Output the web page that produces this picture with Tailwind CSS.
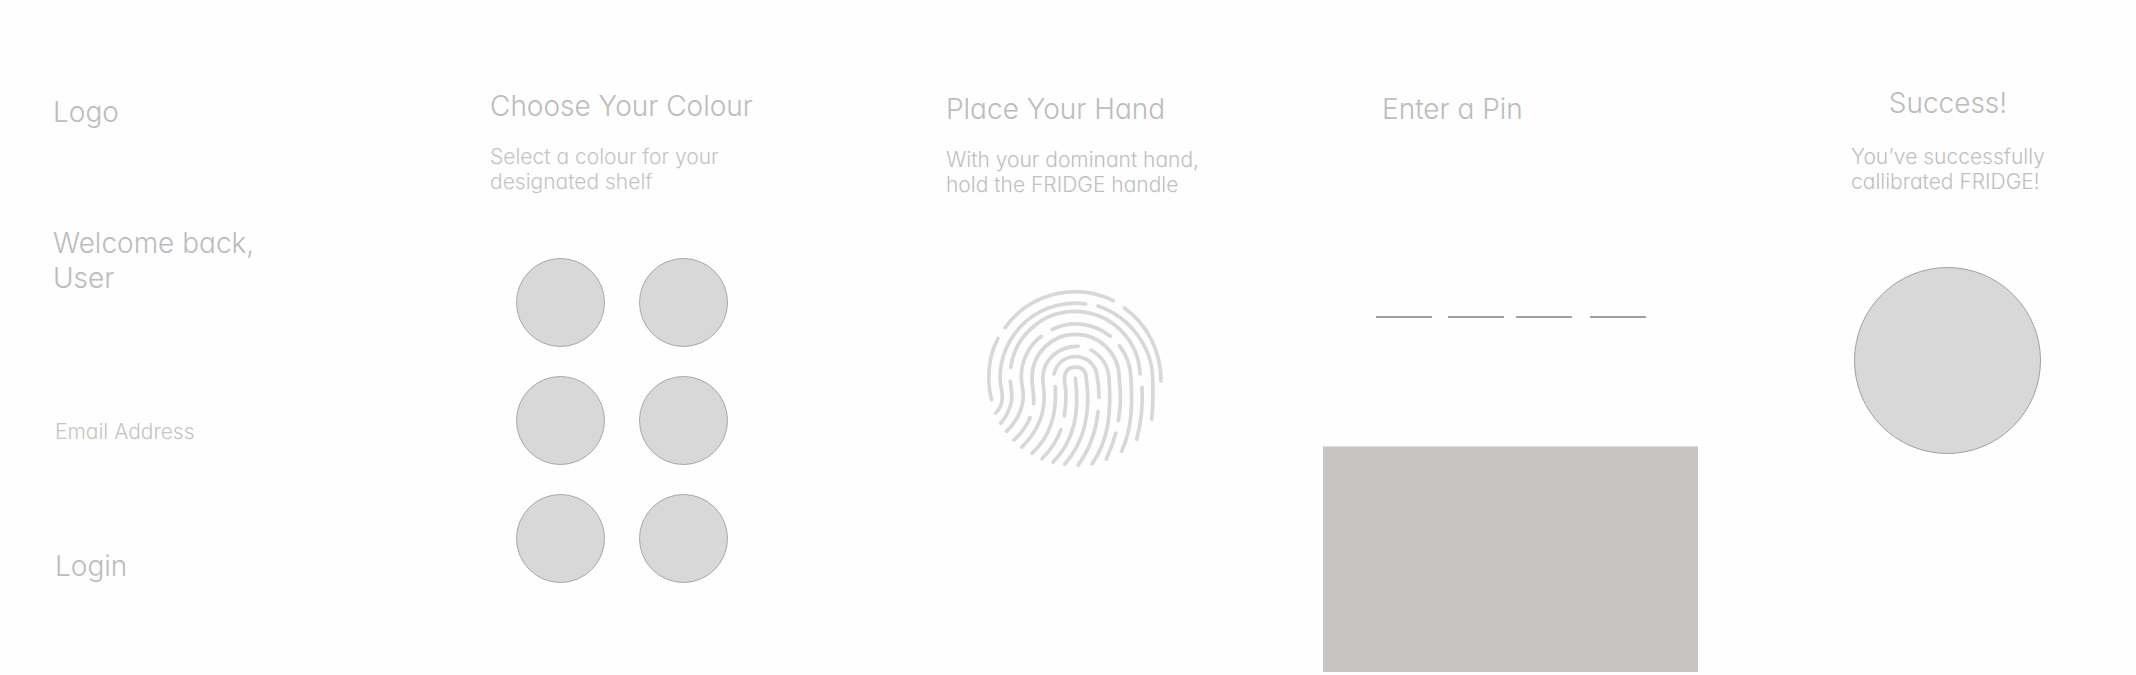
<!DOCTYPE html>
<html lang="en">
<head>
<meta charset="utf-8">
<meta name="viewport" content="width=device-width, initial-scale=1">
<title>FRIDGE setup flow</title>
<script src="https://cdn.jsdelivr.net/npm/@tailwindcss/browser@4"></script>
</head>
<body class="bg-[#fefefe] font-['Inter',sans-serif] font-light text-[#bcbcbc] [font-feature-settings:'cv11']">
<main class="grid min-h-screen grid-cols-[490fr_456fr_377fr_528fr_285fr] items-start">

  <!-- Sign in -->
  <form class="flex flex-col items-start pt-[95px] pl-[53px]">
    <p class="text-[28px] leading-[35px]">Logo</p>
    <h1 class="mt-24 text-[28px] leading-[35px]">Welcome back,<br>User</h1>
    <input type="email" aria-label="Email Address" placeholder="Email Address" class="mt-[123px] ml-0.5 h-[25px] w-60 bg-transparent text-[21px] leading-[25px] outline-none placeholder:text-[#c4c4c4]">
    <button type="button" class="mt-[105px] ml-0.5 text-[28px] leading-[35px]">Login</button>
  </form>

  <!-- Colour choice -->
  <section class="pt-[89px]">
    <h2 class="text-[28px] leading-[35px]">Choose Your Colour</h2>
    <p class="mt-5 text-[21px] leading-[25px] text-[#c4c4c4]">Select a colour for your<br>designated shelf</p>
    <div class="mt-16 ml-[26px] grid w-fit grid-cols-2 gap-x-[34px] gap-y-[29px]">
      <button type="button" aria-label="Colour 1" class="size-[89px] rounded-full border border-[#a8a8a8] bg-[#d8d8d8]"></button>
      <button type="button" aria-label="Colour 2" class="size-[89px] rounded-full border border-[#a8a8a8] bg-[#d8d8d8]"></button>
      <button type="button" aria-label="Colour 3" class="size-[89px] rounded-full border border-[#a8a8a8] bg-[#d8d8d8]"></button>
      <button type="button" aria-label="Colour 4" class="size-[89px] rounded-full border border-[#a8a8a8] bg-[#d8d8d8]"></button>
      <button type="button" aria-label="Colour 5" class="size-[89px] rounded-full border border-[#a8a8a8] bg-[#d8d8d8]"></button>
      <button type="button" aria-label="Colour 6" class="size-[89px] rounded-full border border-[#a8a8a8] bg-[#d8d8d8]"></button>
    </div>
  </section>

  <!-- Hand scan -->
  <section class="pt-[92px]">
    <h2 class="text-[28px] leading-[35px]">Place Your Hand</h2>
    <p class="mt-5 text-[21px] leading-[25px] whitespace-nowrap text-[#c0c0c0]">With your dominant hand,<br>hold the FRIDGE handle</p>
    <svg class="mt-[91px] ml-[39px] h-[182px] w-[180px]" viewBox="985 288 180 182" fill="none" stroke="#d8d8d8" stroke-width="3.7" stroke-linecap="round" stroke-linejoin="round" role="img" aria-label="Fingerprint">
      <path d="M1005 327.7A86.2 86.2 0 0 1 1113.3 300.7"/>
      <path d="M998 338.3C991 351 988.5 365 988.7 380Q989 391 991.7 399.7"/>
      <path d="M1124.3 308C1147 324 1161 351 1161 381"/>
      <path d="M1085.7 304A75 75 0 0 0 1000 378C1000 386 1002.5 390 1002.3 398C1002 404 1000 409 995.7 413"/>
      <path d="M1098 306C1130 317 1152 347 1152.7 378C1153.3 394 1153 407 1151.7 419.3"/>
      <path d="M1010.7 367.3A65 65 0 0 1 1140 374"/>
      <path d="M1010.3 381.3C1011 388 1012.5 392 1011.7 400Q1010 412 1000.7 423.3"/>
      <path d="M1142 387.3Q1143.5 414 1136.7 439.3"/>
      <path d="M1052.3 329.3A54.2 54.2 0 0 1 1110.3 336.3"/>
      <path d="M1041.3 336.3C1028 346 1021 362 1021.3 378C1021.7 386 1024 391 1023 400Q1021 417 1006.7 431.3"/>
      <path d="M1119.3 345.7C1127 355 1130.5 365 1131 378C1132.5 406 1132 428 1121.7 451.3"/>
      <path d="M1033.7 403.7C1034 393 1032 386 1032 378A43.5 43.5 0 0 1 1119.2 378C1121 393 1121 407 1118.3 420.7"/>
      <path d="M1078.3 346.3C1058 346 1043 360 1042.8 378C1043 386 1044.4 391 1044.2 398C1044 417 1036 433 1021.7 447.3"/>
      <path d="M1091 350C1102 356 1108 366 1109 378C1111.5 411 1109 440 1092 464"/>
      <path d="M1054 374C1057 363 1065 356.7 1075.5 356.7C1088 356.7 1097 366 1097.3 378Q1099 387 1099 397.3"/>
      <path d="M1055.3 386.7C1057 413 1050 437 1032 453.3"/>
      <path d="M1064.3 416Q1066.5 400 1065.7 390C1065.2 384 1064 381 1064.5 377C1065.5 370 1070 367.2 1075.3 367.2C1082 367.2 1086 371 1086.3 378C1091 412 1085 441 1064.7 464.3"/>
      <path d="M1075.3 378C1080 411 1075 440 1053 462.3"/>
      <path d="M1098 411.7C1096 432 1089 450 1078 465.3"/>
      <path d="M1115.7 433.3Q1112 447 1106.3 459"/>
      <path d="M1061 429.7Q1055 446 1042 458.7"/>
      <path d="M1030 417.7Q1025 430 1014 440"/>
    </svg>
  </section>

  <!-- PIN entry -->
  <section class="pt-[92px]">
    <h2 class="ml-[59px] text-[28px] leading-[35px]">Enter a Pin</h2>
    <div class="mt-[159px] ml-[53px] flex">
      <input type="text" inputmode="numeric" maxlength="1" aria-label="Pin digit 1" class="h-8 w-14 border-b-2 border-[#a0a0a0] bg-transparent text-center outline-none">
      <input type="text" inputmode="numeric" maxlength="1" aria-label="Pin digit 2" class="ml-4 h-8 w-14 border-b-2 border-[#a0a0a0] bg-transparent text-center outline-none">
      <input type="text" inputmode="numeric" maxlength="1" aria-label="Pin digit 3" class="ml-3 h-8 w-14 border-b-2 border-[#a0a0a0] bg-transparent text-center outline-none">
      <input type="text" inputmode="numeric" maxlength="1" aria-label="Pin digit 4" class="ml-[18px] h-8 w-14 border-b-2 border-[#a0a0a0] bg-transparent text-center outline-none">
    </div>
    <!-- Keypad area -->
    <div class="mt-32 h-[226px] w-[375px] border-t border-[#dcdbda] bg-[#c6c5c3]"></div>
  </section>

  <!-- Done -->
  <section class="flex w-fit flex-col items-center pt-[86px]">
    <h2 class="text-[28px] leading-[35px]">Success!</h2>
    <p class="mt-[23px] text-[21px] leading-[25px] whitespace-nowrap text-[#c0c0c0]">You’ve successfully<br>callibrated FRIDGE!</p>
    <div class="mt-[73px] size-[187px] rounded-full border border-[#a0a0a0] bg-[#d8d8d8]"></div>
  </section>

</main>
</body>
</html>
